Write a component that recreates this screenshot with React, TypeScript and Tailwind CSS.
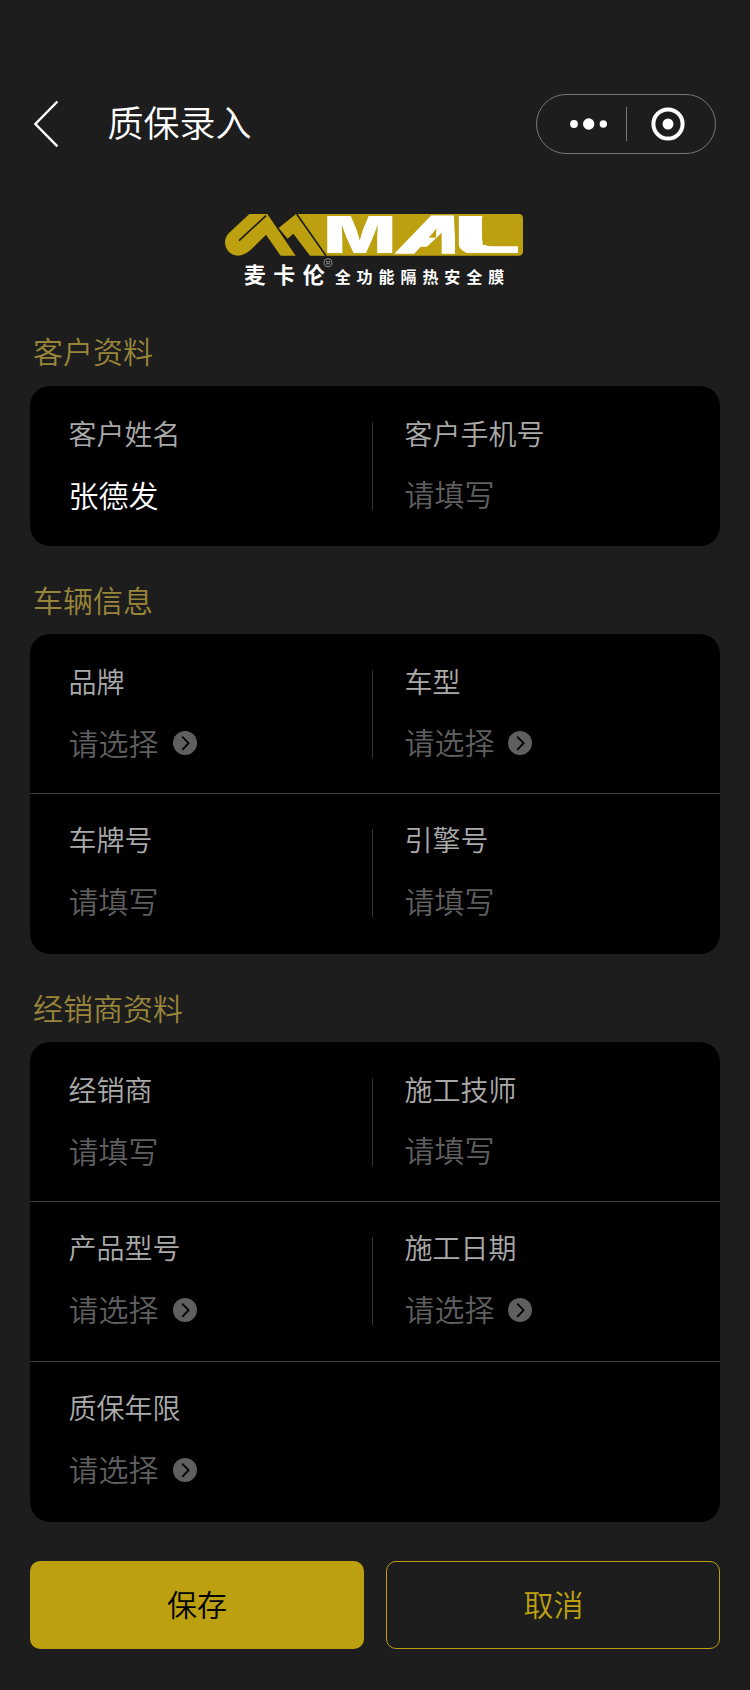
type FieldData = { label: string; value?: string; select?: boolean };
type SectionData = { title: string; rows: FieldData[][] };

const sections: SectionData[] = [
  {
    title: '客户资料',
    rows: [[{ label: '客户姓名', value: '张德发' }, { label: '客户手机号' }]],
  },
  {
    title: '车辆信息',
    rows: [
      [{ label: '品牌', select: true }, { label: '车型', select: true }],
      [{ label: '车牌号' }, { label: '引擎号' }],
    ],
  },
  {
    title: '经销商资料',
    rows: [
      [{ label: '经销商' }, { label: '施工技师' }],
      [{ label: '产品型号', select: true }, { label: '施工日期', select: true }],
      [{ label: '质保年限', select: true }],
    ],
  },
];

function SelectIcon({ className }: { className: string }) {
  return (
    <svg className={`size-6 ${className}`} viewBox="0 0 24 24" fill="none">
      <circle cx="12" cy="12" r="12" fill="#5f5f5f" />
      <path d="M9.2 5.6 15.6 12.2 9.2 18.9" stroke="#000" strokeWidth="1.8" />
    </svg>
  );
}

function Field({ field, first, right = false }: { field: FieldData; first: boolean; right?: boolean }) {
  const gap = right && first ? 'mt-[31px]' : 'mt-8';
  const icon = right ? (first ? 'ml-[13.5px] mt-1' : 'ml-[13.5px] mt-1') : first ? 'ml-[14.5px] mt-0.5' : 'ml-[14.5px] mt-1';
  return (
    <div className={first ? 'pt-[33px]' : 'pt-[31px]'}>
      <div className="h-7 text-[28px] leading-7 text-[#aaaaaa]">{field.label}</div>
      <div className={`flex h-[30px] items-center text-[30px] leading-[30px] ${gap}`}>
        {field.value ? (
          <span className="text-white">{field.value}</span>
        ) : (
          <span className="text-[#5f5f5f]">{field.select ? '请选择' : '请填写'}</span>
        )}
        {field.select && <SelectIcon className={icon} />}
      </div>
    </div>
  );
}

function Row({ fields, first, last }: { fields: FieldData[]; first: boolean; last: boolean }) {
  return (
    <div className={`flex h-40 ${last ? '' : 'border-b border-[#3d3d3d]'}`}>
      <div className="w-[342px] pl-[38.5px]">
        <Field field={fields[0]} first={first} />
      </div>
      {fields[1] && (
        <>
          <div className={`h-[88px] w-px bg-[#333333] ${first ? 'mt-9' : 'mt-[35px]'}`} />
          <div className="pl-[31.5px]">
            <Field field={fields[1]} first={first} right />
          </div>
        </>
      )}
    </div>
  );
}

function Logo() {
  return (
    <svg
      className="mx-auto block h-[100px] w-[330px]"
      viewBox="0 0 990 300"
      fontFamily="'Noto Sans CJK SC', sans-serif"
      fill="#fff"
    >
      <path
        fill="#bca00f"
        d="M118 42H172L257 167H212L168 104L124 148Q104 167 82 167Q46 161 45 125Q46 108 60 96Z"
      />
      <path fill="#bca00f" d="M258 42H926Q939 42 939 55V154Q939 167 926 167H300L250 101L233 116L206 84Z" />
      <path d="M168 47L87 122M260 42L348 167" stroke="#1d1d1d" strokeWidth="5" fill="none" />
      <g fontFamily="Inter, sans-serif" fontWeight="900" fontSize="151">
        <text x="341" y="160" textLength="216" lengthAdjust="spacingAndGlyphs">M</text>
        <text
          transform="translate(554 159) skewX(-25)"
          textLength="184"
          lengthAdjust="spacingAndGlyphs"
          stroke="#fff"
          strokeWidth="5"
        >
          A
        </text>
        <text x="730" y="160" textLength="204" lengthAdjust="spacingAndGlyphs">L</text>
      </g>
      <path fill="#bca00f" d="M625 165 695 98V165ZM816 50H930V139H842Q816 139 816 112ZM735 50H741V120Q744 152 778 161V165H735Z" />
      <g fontWeight="700" fontSize="66">
        <text x="101" y="250">麦</text>
        <text x="190" y="250">卡</text>
        <text x="278" y="250">伦</text>
      </g>
      <circle cx="354" cy="188" r="12" fill="none" stroke="#8a8a8a" strokeWidth="3" />
      <text x="348" y="195" fontSize="18" fontFamily="'Liberation Sans', sans-serif" fill="#aaa">R</text>
      <text x="374" y="249" fontWeight="700" fontSize="48" letterSpacing="17.8">全功能隔热安全膜</text>
    </svg>
  );
}

export default function App() {
  return (
    <div className="flex h-[1690px] w-[750px] flex-col bg-[#1d1d1d] px-[30px] pt-[94px] font-['Noto_Sans_CJK_SC',sans-serif] font-[350]">
      <header className="flex h-[60px] items-center">
        <svg className="h-[50px] w-[30px]" viewBox="30 99 30 50" fill="none">
          <path d="M57.4 101.5 35.4 124 57.4 146.4" stroke="#fff" strokeWidth="2.4" />
        </svg>
        <h1 className="-mt-1.5 ml-[47.5px] text-[36px] leading-[36px] text-white">质保录入</h1>
        <div className="mr-1 ml-auto flex h-[60px] w-[180px] items-center rounded-full border border-[#777777]">
          <svg className="ml-8 h-5 w-10" viewBox="569 114 40 20" fill="#fff">
            <circle cx="574" cy="124" r="3.9" />
            <circle cx="588.7" cy="124" r="5.7" />
            <circle cx="603.3" cy="124" r="3.7" />
          </svg>
          <div className="ml-[17px] h-[34px] w-px bg-[#777777]" />
          <svg className="ml-6 size-[34px]" viewBox="0 0 34 34" fill="none">
            <circle cx="17" cy="17" r="14.6" stroke="#fff" strokeWidth="4" />
            <circle cx="17" cy="17" r="5.5" fill="#fff" />
          </svg>
        </div>
      </header>
      <div className="mt-[46px] h-[100px]">
        <Logo />
      </div>
      <main>
        {sections.map((s, si) => (
          <section key={s.title} className={si === 0 ? 'pt-[35px]' : 'pt-[38px]'}>
            <h2 className="pl-[3px] text-[30px] leading-[30px] text-[#99853a]">{s.title}</h2>
            <div className={`overflow-hidden rounded-[20px] bg-black ${si === 0 ? 'mt-[21px]' : 'mt-5'}`}>
              {s.rows.map((r, i) => (
                <Row key={r[0].label} fields={r} first={i === 0} last={i === s.rows.length - 1} />
              ))}
            </div>
          </section>
        ))}
      </main>
      <div className="mt-[39px] flex gap-[22px] text-[30px] leading-[30px]">
        <button className="h-[88px] w-[334px] rounded-[10px] bg-[#bca00f] pb-1 text-black">保存</button>
        <button className="h-[88px] w-[334px] rounded-[10px] border border-[#bca00f] pb-1 pl-px text-[#bca00f]">取消</button>
      </div>
    </div>
  );
}
